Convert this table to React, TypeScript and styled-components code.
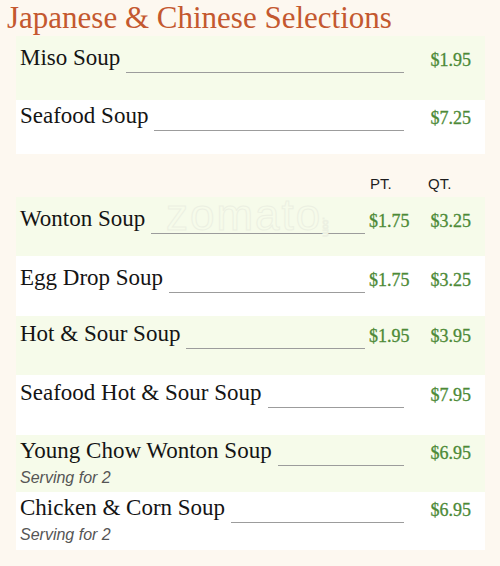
import React from 'react'
import styled, { createGlobalStyle } from 'styled-components';

const GlobalStyle = createGlobalStyle`
  html, body {
    margin: 0;
    padding: 0;
    background: #fdf8f0;
  }
`;

type Item = {
  name: string;
  prices: string[];
  note?: string;
  pad: number;
  h: number;
};

const topItems: Item[] = [
  { name: 'Miso Soup', prices: ['$1.95'], pad: 9, h: 64 },
  { name: 'Seafood Soup', prices: ['$7.25'], pad: 3, h: 54 },
];

const soupItems: Item[] = [
  { name: 'Wonton Soup', prices: ['$1.75', '$3.25'], pad: 9, h: 59 },
  { name: 'Egg Drop Soup', prices: ['$1.75', '$3.25'], pad: 9, h: 60 },
  { name: 'Hot & Sour Soup', prices: ['$1.95', '$3.95'], pad: 5, h: 59 },
  { name: 'Seafood Hot & Sour Soup', prices: ['$7.95'], pad: 5, h: 60 },
  { name: 'Young Chow Wonton Soup', prices: ['$6.95'], note: 'Serving for 2', pad: 3, h: 57 },
  { name: 'Chicken & Corn Soup', prices: ['$6.95'], note: 'Serving for 2', pad: 3, h: 58 },
];

function MenuRow({ item, index }: { item: Item; index: number }) {
  const double = item.prices.length > 1;
  return (
    <Row $green={index % 2 === 0} $pad={item.pad} $h={item.h}>
      <Line>
        <NameWrap>
          <Name>{item.name}</Name>
          <Leader />
        </NameWrap>
        {double ? (
          <>
            <Price $col="pt">{item.prices[0]}</Price>
            <Price $col="qt">{item.prices[1]}</Price>
          </>
        ) : (
          <Price $col="single">{item.prices[0]}</Price>
        )}
      </Line>
      {item.note && <Note>{item.note}</Note>}
    </Row>
  );
}

function App() {
  return (
    <Page>
      <GlobalStyle />
      <Title>Japanese &amp; Chinese Selections</Title>
      <List>
        {topItems.map((item, i) => (
          <MenuRow key={item.name} item={item} index={i} />
        ))}
      </List>
      <Header>
        <Spacer />
        <HeadCell $col="pt">PT.</HeadCell>
        <HeadCell $col="qt">QT.</HeadCell>
      </Header>
      <List>
        <Watermark>zomato<small>.com</small></Watermark>
        {soupItems.map((item, i) => (
          <MenuRow key={item.name} item={item} index={i} />
        ))}
      </List>
    </Page>
  );
}

const Page = styled.div`
  width: 500px;
  height: 566px;
  background: #fdf8f0;
  overflow: hidden;
`;

const Title = styled.h1`
  margin: 0 0 1px 7px;
  height: 35px;
  font-family: "Liberation Serif", "DejaVu Serif", serif;
  font-weight: normal;
  font-size: 31px;
  line-height: 35px;
  color: #c4582f;
  white-space: nowrap;
`;

const List = styled.div`
  position: relative;
  margin-left: 16px;
  width: 469px;
  display: flex;
  flex-direction: column;
`;

const Row = styled.div<{ $green: boolean; $pad: number; $h: number }>`
  position: relative;
  box-sizing: border-box;
  height: ${(p) => p.$h}px;
  padding: ${(p) => p.$pad}px 14px 0 4px;
  background: ${(p) => (p.$green ? '#f6fbea' : '#ffffff')};
  display: flex;
  flex-direction: column;
`;

const Line = styled.div`
  display: flex;
  align-items: flex-start;
  height: 26px;
`;

const NameWrap = styled.div`
  flex: 1;
  display: flex;
  height: 26px;
`;

const Name = styled.span`
  font-family: "Liberation Serif", "DejaVu Serif", serif;
  font-size: 23px;
  line-height: 26px;
  color: #141414;
  white-space: nowrap;
`;

const Leader = styled.span`
  flex: 1;
  margin-left: 6px;
  height: 28px;
  border-bottom: 1.5px solid #9c9c9c;
  box-sizing: border-box;
`;

const colWidth = { pt: 47, qt: 59, single: 67 } as const;

const Price = styled.span<{ $col: 'pt' | 'qt' | 'single' }>`
  width: ${(p) => colWidth[p.$col]}px;
  box-sizing: border-box;
  padding-left: ${(p) => (p.$col === 'pt' ? 4 : 0)}px;
  text-align: ${(p) => (p.$col === 'pt' ? 'left' : 'right')};
  font-family: "Liberation Serif", "DejaVu Serif", serif;
  font-size: 18px;
  line-height: 26px;
  padding-top: 2px;
  color: #4d8a37;
  -webkit-text-stroke: 0.3px #4d8a37;
`;

const Note = styled.div`
  font-family: "Liberation Sans", Arial, sans-serif;
  font-style: italic;
  font-size: 16px;
  line-height: 18px;
  margin-top: 5px;
  color: #555555;
`;

const Header = styled.div`
  box-sizing: border-box;
  margin-left: 16px;
  width: 469px;
  height: 43px;
  padding: 0 14px 5px 4px;
  display: flex;
  align-items: flex-end;
`;

const Spacer = styled.div`
  flex: 1;
`;

const HeadCell = styled.span<{ $col: 'pt' | 'qt' }>`
  width: ${(p) => colWidth[p.$col]}px;
  box-sizing: border-box;
  padding-left: ${(p) => (p.$col === 'pt' ? 5 : 16)}px;
  font-family: "Liberation Sans", Arial, sans-serif;
  font-size: 15px;
  line-height: 17px;
  color: #1e1e1e;
`;

const Watermark = styled.div`
  position: absolute;
  z-index: 1;
  left: 150px;
  top: -4px;
  font-family: "Liberation Sans", Arial, sans-serif;
  font-size: 44px;
  line-height: 44px;
  letter-spacing: 2px;
  color: transparent;
  -webkit-text-stroke: 1px #ecf0e2;
  pointer-events: none;
  small {
    font-size: 9px;
    letter-spacing: 0;
    display: inline-block;
    transform: rotate(90deg);
    margin-left: -6px;
  }
`;

export default App
